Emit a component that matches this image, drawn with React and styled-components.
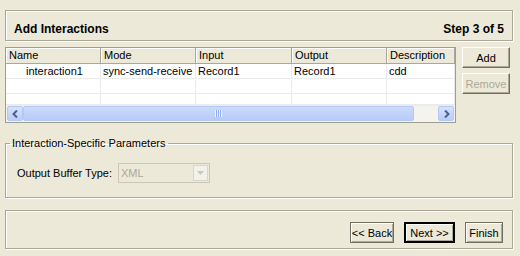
import React from 'react'
import styled, { createGlobalStyle } from 'styled-components'

const Global = createGlobalStyle`
  html, body {
    margin: 0;
    padding: 0;
    background: #ece9d8;
  }
  body {
    font-family: Tahoma, "Liberation Sans", Arial, sans-serif;
    font-size: 11px;
    color: #000;
  }
`

const Page = styled.div`
  width: 520px;
  height: 256px;
  box-sizing: border-box;
  padding: 10px 7px 0 5px;
  display: flex;
  flex-direction: column;
`

const Etched = styled.div`
  box-sizing: border-box;
  border: 1px solid #aca899;
  box-shadow: inset 1px 1px 0 #fff, 1px 1px 0 #fff;
`

const HeaderPanel = styled(Etched)`
  height: 31px;
  flex: none;
  display: flex;
  align-items: center;
  justify-content: space-between;
  padding: 6px 8px 0 8px;
  font-weight: bold;
  font-size: 12px;
`

const TableArea = styled.div`
  display: flex;
  margin-top: 6px;
  gap: 6px;
`

const TableBox = styled.div`
  width: 451px;
  height: 76px;
  box-sizing: border-box;
  border: 1px solid #9d9d92;
  background: #fff;
  display: flex;
  flex-direction: column;
  overflow: hidden;
`

const Grid = styled.div`
  display: grid;
  grid-template-columns: 95px 95px 96px 95px 68px;
  flex: 1;
  grid-template-rows: 16px 15px 15px 1fr;
  overflow: hidden;
`

const HeadCell = styled.div`
  background: #ece9d8;
  border-right: 1px solid #aca899;
  border-bottom: 1px solid #aca899;
  box-shadow: inset 1px 1px 0 #fff;
  padding-left: 3px;
  line-height: 15px;
  white-space: nowrap;
  overflow: hidden;
`

const Cell = styled.div`
  border-right: 1px solid #ebebeb;
  border-bottom: 1px solid #ebebeb;
  padding-left: ${p => (p.$indent ? 20 : 2)}px;
  line-height: 14px;
  white-space: nowrap;
  overflow: hidden;
`

const ScrollBar = styled.div`
  height: 15px;
  flex: none;
  display: flex;
  align-items: stretch;
  background: #f4f3ee;
  padding: 0 1px 1px 1px;
`

const Arrow = styled.div`
  width: 16px;
  box-sizing: border-box;
  border: 1px solid #b4c8f6;
  border-radius: 2px;
  background: linear-gradient(#d6e2fc, #b9cdfa);
  display: flex;
  align-items: center;
  justify-content: center;
`

const Thumb = styled.div`
  flex: 0 0 391px;
  box-sizing: border-box;
  border: 1px solid #b4c8f6;
  border-radius: 2px;
  background: linear-gradient(#cbdafc, #b8cbf9);
  display: flex;
  align-items: center;
  justify-content: center;
`

const Track = styled.div`
  flex: 1;
`

const Grip = styled.div`
  width: 7px;
  height: 7px;
  background: repeating-linear-gradient(90deg, #eef3fe 0 1px, #8caaee 1px 2px);
`

const SideButtons = styled.div`
  display: flex;
  flex-direction: column;
  gap: 5px;
`

const Button = styled.button`
  font: inherit;
  white-space: nowrap;
  height: ${p => p.$h || 21}px;
  width: ${p => p.$w}px;
  box-sizing: border-box;
  padding: 0;
  background: #ece9d8;
  color: ${p => (p.disabled ? '#aca899' : '#000')};
  border: ${p => (p.$default ? '2px solid #000' : '1px solid #716f64')};
  border-top-color: ${p => (p.$raised ? '#fff' : p.$default ? '#000' : '#716f64')};
  border-left-color: ${p => (p.$raised ? '#fff' : p.$default ? '#000' : '#716f64')};
  box-shadow: ${p => (p.$raised ? 'inset -1px -1px 0 #aca899' : 'inset 1px 1px 0 #fff, inset -1px -1px 0 #aca899')};
`

const Group = styled.fieldset`
  margin: 14px 0 0 0;
  padding: 0 0 0 4px;
  height: 61px;
  flex: none;
  box-sizing: border-box;
  border: 1px solid #aca899;
  box-shadow: inset 1px 1px 0 #fff, 1px 1px 0 #fff;
`

const Legend = styled.legend`
  padding: 0 3px 0 2px;
  margin-left: 0;
  line-height: 12px;
`

const FieldRow = styled.div`
  display: flex;
  align-items: center;
  gap: 6px;
  margin-top: 14px;
  padding-left: 7px;
`

const Combo = styled.div`
  width: 92px;
  height: 20px;
  box-sizing: border-box;
  border: 1px solid #c9c7ba;
  display: flex;
  align-items: center;
  justify-content: space-between;
  padding: 0 1px 0 2px;
  color: #aca899;
`

const ComboButton = styled.div`
  width: 15px;
  height: 16px;
  box-sizing: border-box;
  border: 1px solid #d8d5c9;
  background: #f2f1ea;
  display: flex;
  align-items: center;
  justify-content: center;
`

const FooterPanel = styled(Etched)`
  margin-top: 12px;
  height: 39px;
  flex: none;
  display: flex;
  align-items: flex-end;
  justify-content: flex-end;
  gap: 10px;
  padding: 0 9px 5px 0;
`

const columns = ['Name', 'Mode', 'Input', 'Output', 'Description']
const rows = [
  ['interaction1', 'sync-send-receive', 'Record1', 'Record1', 'cdd'],
  ['', '', '', '', ''],
  ['', '', '', '', ''],
]

const ArrowIcon = ({ dir }) => (
  <svg width="7" height="8" viewBox="0 0 7 8">
    <path
      d={dir === 'left' ? 'M5 0.5 L1.5 4 L5 7.5' : 'M2 0.5 L5.5 4 L2 7.5'}
      stroke="#4d6185"
      strokeWidth="2"
      fill="none"
    />
  </svg>
)

export default function App() {
  return (
    <>
      <Global />
      <Page>
        <HeaderPanel>
          <span>Add Interactions</span>
          <span>Step 3 of 5</span>
        </HeaderPanel>

        <TableArea>
          <TableBox>
            <Grid>
              {columns.map(c => (
                <HeadCell key={c}>{c}</HeadCell>
              ))}
              {rows.map((r, i) =>
                r.map((v, j) => (
                  <Cell key={i + '-' + j} $indent={j === 0}>
                    {v}
                  </Cell>
                ))
              )}
              {columns.map(c => (
                <Cell key={'f' + c} />
              ))}
            </Grid>
            <ScrollBar>
              <Arrow>
                <ArrowIcon dir="left" />
              </Arrow>
              <Thumb>
                <Grip />
              </Thumb>
              <Track />
              <Arrow>
                <ArrowIcon dir="right" />
              </Arrow>
            </ScrollBar>
          </TableBox>
          <SideButtons>
            <Button $w={48} $raised>Add</Button>
            <Button $w={48} $raised disabled>Remove</Button>
          </SideButtons>
        </TableArea>

        <Group>
          <Legend>Interaction-Specific Parameters</Legend>
          <FieldRow>
            <span>Output Buffer Type:</span>
            <Combo>
              <span>XML</span>
              <ComboButton>
                <svg width="7" height="4" viewBox="0 0 7 4">
                  <path d="M0 0 H7 L3.5 4 Z" fill="#c9c7ba" />
                </svg>
              </ComboButton>
            </Combo>
          </FieldRow>
        </Group>

        <FooterPanel>
          <Button $w={44} $h={21}>&lt;&lt; Back</Button>
          <Button $w={51} $h={21} $default>Next &gt;&gt;</Button>
          <Button $w={38} $h={21}>Finish</Button>
        </FooterPanel>
      </Page>
    </>
  )
}
